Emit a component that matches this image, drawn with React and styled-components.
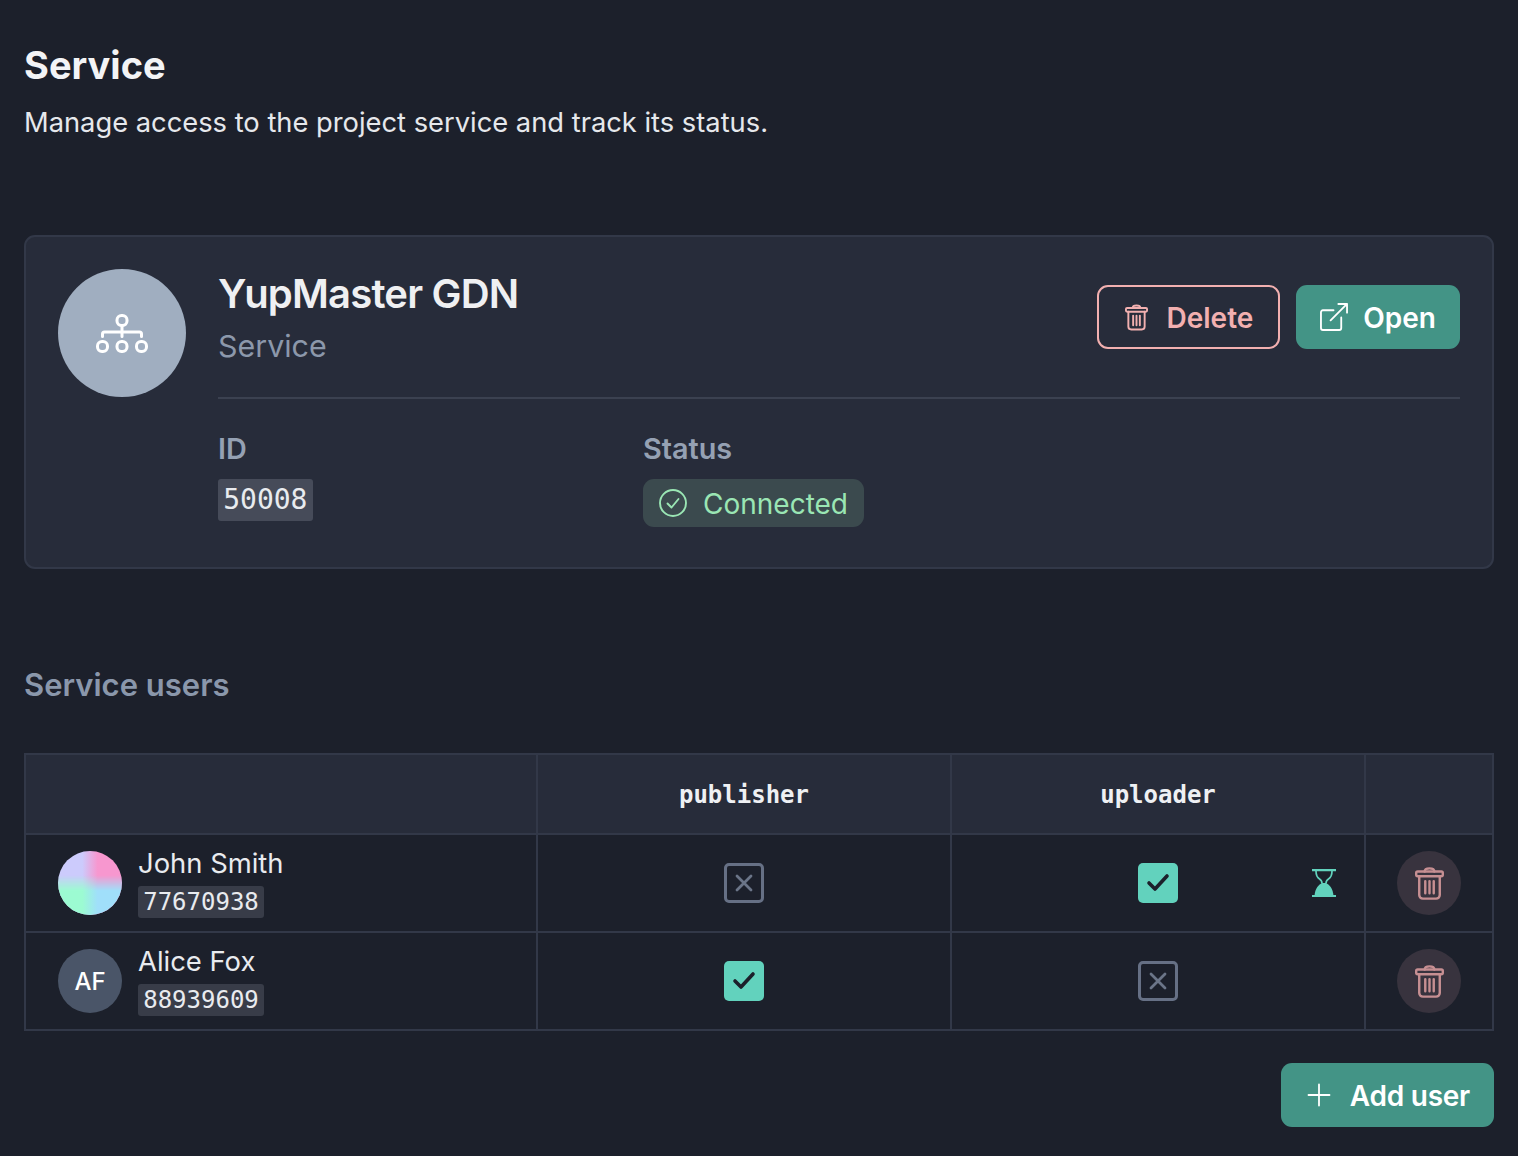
import React from "react";
import styled, { createGlobalStyle } from "styled-components";

const Global = createGlobalStyle`
  html, body { margin: 0; padding: 0; background: #1c202b; }
  * { box-sizing: border-box; }
  body { font-family: Inter, "Liberation Sans", sans-serif; color: #f1f2f4; }
`;

const Page = styled.main`
  min-height: 1156px;
  padding: 40px 24px 29px;
  display: flex;
  flex-direction: column;
  background: #1c202b;
`;
const Title = styled.h1`
  margin: 0;
  font-size: 38px;
  line-height: 50px;
  font-weight: 700;
  color: #f3f4f6;
`;
const Subtitle = styled.p`
  margin: 8px 0 0;
  font-size: 27.3px;
  line-height: 50px;
  font-weight: 400;
  color: #e6e8ec;
`;
const Card = styled.section`
  margin-top: 87px;
  height: 334px;
  padding: 32px;
  display: flex;
  gap: 32px;
  background: #272c3a;
  border: 2px solid #323848;
  border-radius: 11px;
`;
const ServiceAvatar = styled.div`
  width: 128px;
  height: 128px;
  flex: none;
  border-radius: 50%;
  background: #a0aec0;
  display: flex;
  align-items: center;
  justify-content: center;
`;
const CardBody = styled.div`
  flex: 1;
  display: flex;
  flex-direction: column;
`;
const CardHead = styled.div`
  height: 130px;
  display: flex;
  justify-content: space-between;
  border-bottom: 2px solid #3b4150;
`;
const Name = styled.h2`
  margin: 0;
  font-size: 40px;
  line-height: 50px;
  font-weight: 600;
  letter-spacing: -0.8px;
  color: #eff0f2;
`;
const Kind = styled.div`
  margin-top: 2px;
  font-size: 30.4px;
  line-height: 50px;
  color: #8c98ab;
`;
const Actions = styled.div`
  margin-top: 16px;
  display: flex;
  gap: 16px;
`;
const Button = styled.button`
  height: 64px;
  display: inline-flex;
  align-items: center;
  justify-content: center;
  gap: ${(p) => p.$gap || 16}px;
  padding: 0 ${(p) => p.$pr || 24}px 0 ${(p) => p.$pl || 24}px;
  border-radius: 11px;
  font-family: inherit;
  font-size: 28px;
  font-weight: 600;
  letter-spacing: ${(p) => p.$spacing || 0}px;
  background: ${(p) => (p.$outline ? "transparent" : "#439486")};
  color: ${(p) => (p.$outline ? "#f2b0b0" : "#fff")};
  border: ${(p) => (p.$outline ? "2px solid #f2b0b0" : "none")};
`;
const ButtonText = styled.span`
  padding-top: 2px;
`;
const Facts = styled.div`
  display: grid;
  grid-template-columns: 425px 1fr;
  margin-top: 32px;
`;
const Fact = styled.div`
  display: flex;
  flex-direction: column;
  align-items: flex-start;
`;
const FactLabel = styled.div`
  font-size: 28.8px;
  line-height: 36px;
  font-weight: 600;
  color: #95a1b3;
  margin-bottom: 12px;
`;
const Code = styled.code`
  font-family: "DejaVu Sans Mono", "Liberation Mono", monospace;
  font-size: ${(p) => p.$size || 28}px;
  line-height: ${(p) => p.$h || 42}px;
  height: ${(p) => p.$h || 42}px;
  padding: 0 5.2px;
  border-radius: 3px;
  background: ${(p) => p.$bg || "#464b59"};
  color: #e9ebef;
  white-space: nowrap;
`;
const StatusBadge = styled.div`
  height: 48px;
  display: inline-flex;
  align-items: center;
  gap: 16px;
  padding: 0 16px;
  border-radius: 11px;
  background: #3b4a4e;
  color: #9ae6b4;
  font-size: 28px;
`;
const SectionTitle = styled.h3`
  margin: 96px 0 0;
  font-size: 31px;
  line-height: 40px;
  font-weight: 600;
  color: #8a97ab;
`;
const Table = styled.table`
  margin-top: 48px;
  width: 1468px;
  table-layout: fixed;
  border-collapse: collapse;
  border: 2px solid #323848;
`;
const HeadRow = styled.tr`
  height: 80px;
  background: #272c3a;
`;
const Th = styled.th`
  padding: 1px 0 0;
  border: 2px solid #323848;
  font-family: "DejaVu Sans Mono", "Liberation Mono", monospace;
  font-size: 24px;
  font-weight: 700;
  color: #eef0f3;
`;
const Row = styled.tr`
  height: 98px;
`;
const Td = styled.td`
  position: relative;
  padding: 0;
  border: 2px solid #323848;
  text-align: center;
`;
const UserCell = styled.div`
  display: flex;
  align-items: center;
  gap: 16px;
  padding-left: 32px;
  text-align: left;
`;
const Avatar = styled.div`
  position: relative;
  width: 64px;
  height: 64px;
  flex: none;
  border-radius: 50%;
  overflow: hidden;
  display: flex;
  align-items: center;
  justify-content: center;
  background: #4a5568;
  color: #fff;
  font-size: 24px;
  font-weight: 500;
`;
const GradientAvatar = styled(Avatar)`
  background: linear-gradient(to right, #cccbfc 38%, #f797cf 62%);
  &::after {
    content: "";
    position: absolute;
    inset: 0;
    background: linear-gradient(to right, #9cfbd2 38%, #a0dffa 62%);
    -webkit-mask-image: linear-gradient(to bottom, transparent 38%, #000 62%);
    mask-image: linear-gradient(to bottom, transparent 38%, #000 62%);
  }
`;
const UserInfo = styled.div`
  display: flex;
  flex-direction: column;
  align-items: flex-start;
`;
const UserName = styled.div`
  font-size: 27.4px;
  line-height: 30px;
  margin-bottom: 8px;
  color: #e9ebef;
`;
const Check = styled.div`
  width: 40px;
  height: 40px;
  margin: 0 auto;
  display: flex;
  align-items: center;
  justify-content: center;
  border-radius: 5px;
  background: ${(p) => (p.$on ? "#62d2bd" : "transparent")};
  border: ${(p) => (p.$on ? "none" : "3px solid #667085")};
`;
const Pending = styled.div`
  position: absolute;
  right: 28px;
  top: 34px;
  display: flex;
`;
const RoundDelete = styled.button`
  width: 64px;
  height: 64px;
  margin: 0 auto;
  padding: 0;
  display: flex;
  align-items: center;
  justify-content: center;
  border: none;
  border-radius: 50%;
  background: #38333e;
`;
const Footer = styled.div`
  margin-top: 32px;
  display: flex;
  justify-content: flex-end;
`;

const TrashIcon = ({ color, w = 23, h = 27 }) => (
  <svg width={w} height={h} viewBox="0 0 24 27" fill="none" stroke={color} strokeWidth="2" strokeLinecap="round" strokeLinejoin="round">
    <rect x="1" y="3.500" width="22" height="4" rx="1.200" />
    <path d="M8 3.500C8 1.800 10 1 12 1s4 .8 4 2.500" />
    <path d="M3.500 7.500V23a3 3 0 0 0 3 3h11a3 3 0 0 0 3-3V7.500" />
    <path d="M8.500 11.500v10M12 11.500v10M15.500 11.500v10" />
  </svg>
);
const NetworkIcon = () => (
  <svg width="52" height="39" viewBox="0 0 52 39" fill="none" stroke="#fff" strokeWidth="3" strokeLinecap="round" strokeLinejoin="round">
    <rect x="21" y="1.500" width="10" height="10" rx="4.500" />
    <rect x="1.500" y="27.500" width="10" height="10" rx="4.500" />
    <rect x="21" y="27.500" width="10" height="10" rx="4.500" />
    <rect x="40.500" y="27.500" width="10" height="10" rx="4.500" />
    <path d="M26 11.500v11M6.500 22.500V20a2 2 0 0 1 2-2h35a2 2 0 0 1 2 2v2.500" />
  </svg>
);
const ExternalIcon = () => (
  <svg width="28" height="28" viewBox="0 0 29 29" fill="none" stroke="#fff" strokeWidth="1.900" strokeLinecap="round" strokeLinejoin="round">
    <path d="M14 7.500H3a2 2 0 0 0-2 2V26a2 2 0 0 0 2 2h17a2 2 0 0 0 2-2V15" />
    <path d="M11 18L28 1M19 1h9v9" />
  </svg>
);
const CheckCircleIcon = () => (
  <svg width="28" height="28" viewBox="0 0 28 28" fill="none" stroke="#9ae6b4" strokeWidth="1.900" strokeLinecap="round" strokeLinejoin="round">
    <circle cx="14" cy="14" r="13" />
    <path d="M8.500 14.500l4 4 7-8.500" />
  </svg>
);
const CheckMark = () => (
  <svg width="24" height="20" viewBox="0 0 24 20" fill="none" stroke="#1c202b" strokeWidth="3.600" strokeLinecap="round" strokeLinejoin="round">
    <path d="M3 10l6 6L21 3" />
  </svg>
);
const CrossMark = () => (
  <svg width="18" height="18" viewBox="0 0 18 18" fill="none" stroke="#6b7588" strokeWidth="2.800" strokeLinecap="round">
    <path d="M2 2l14 14M16 2L2 16" />
  </svg>
);
const HourglassIcon = () => (
  <svg width="24" height="28" viewBox="0 0 24 28" fill="none">
    <path d="M0 1.200h24M0 27h24" stroke="#62d2bd" strokeWidth="2.200" />
    <path d="M4 2c0 4.500 1 6.500 3.500 8 2 1.200 2.500 2.500 2.500 4.500M20 2c0 4.500-1 6.500-3.500 8-2 1.200-2.500 2.500-2.500 4.500" stroke="#62d2bd" strokeWidth="1.700" />
    <path d="M10 14C7 15.500 3 19 2.500 27h19C21 19 17 15.500 14 14z" fill="#62d2bd" />
  </svg>
);
const PlusIcon = () => (
  <svg width="24" height="24" viewBox="0 0 24 24" fill="none" stroke="#fff" strokeWidth="1.800" strokeLinecap="round">
    <path d="M12 1.500v21M1.500 12h21" />
  </svg>
);

const users = [
  { name: "John Smith", id: "77670938", pub: false, up: true, pending: true },
  { name: "Alice Fox", id: "88939609", pub: true, up: false, initials: "AF" },
];

const Perm = ({ on }) => <Check $on={on}>{on ? <CheckMark /> : <CrossMark />}</Check>;

export default function App() {
  return (
    <Page>
      <Global />
      <Title>Service</Title>
      <Subtitle>Manage access to the project service and track its status.</Subtitle>
      <Card>
        <ServiceAvatar>
          <NetworkIcon />
        </ServiceAvatar>
        <CardBody>
          <CardHead>
            <div>
              <Name>YupMaster GDN</Name>
              <Kind>Service</Kind>
            </div>
            <Actions>
              <Button $outline $gap={18} $pl={26} $pr={25}>
                <TrashIcon color="#f2b0b0" />
                <ButtonText>Delete</ButtonText>
              </Button>
              <Button $gap={15}>
                <ExternalIcon />
                <ButtonText>Open</ButtonText>
              </Button>
            </Actions>
          </CardHead>
          <Facts>
            <Fact>
              <FactLabel>ID</FactLabel>
              <Code>50008</Code>
            </Fact>
            <Fact>
              <FactLabel>Status</FactLabel>
              <StatusBadge>
                <CheckCircleIcon />
                <ButtonText>Connected</ButtonText>
              </StatusBadge>
            </Fact>
          </Facts>
        </CardBody>
      </Card>
      <SectionTitle>Service users</SectionTitle>
      <Table>
        <colgroup>
          <col style={{ width: 512 }} />
          <col style={{ width: 414 }} />
          <col style={{ width: 414 }} />
          <col style={{ width: 128 }} />
        </colgroup>
        <thead>
          <HeadRow>
            <Th />
            <Th>publisher</Th>
            <Th>uploader</Th>
            <Th />
          </HeadRow>
        </thead>
        <tbody>
          {users.map((u) => (
            <Row key={u.id}>
              <Td>
                <UserCell>
                  {u.initials ? <Avatar>{u.initials}</Avatar> : <GradientAvatar />}
                  <UserInfo>
                    <UserName>{u.name}</UserName>
                    <Code $size={24} $h={32} $bg="#383c48">{u.id}</Code>
                  </UserInfo>
                </UserCell>
              </Td>
              <Td>
                <Perm on={u.pub} />
              </Td>
              <Td>
                <Perm on={u.up} />
                {u.pending && (
                  <Pending>
                    <HourglassIcon />
                  </Pending>
                )}
              </Td>
              <Td>
                <RoundDelete>
                  <TrashIcon color="#c68f92" w={29} h={33} />
                </RoundDelete>
              </Td>
            </Row>
          ))}
        </tbody>
      </Table>
      <Footer>
        <Button $gap={19} $pl={26} $spacing={-0.25}>
          <PlusIcon />
          <ButtonText>Add user</ButtonText>
        </Button>
      </Footer>
    </Page>
  );
}
